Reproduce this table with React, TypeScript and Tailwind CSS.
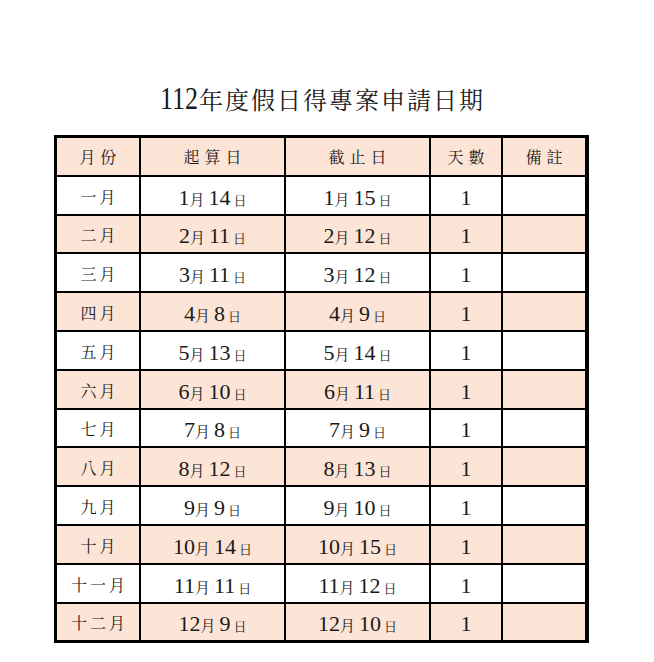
const FONT = "font-['Liberation_Serif','Noto_Serif_CJK_TC','Noto_Sans_CJK_TC',serif]"

const rows: [string, string, string, string, string][] = [
  ['一月', '1', '14', '1', '15'],
  ['二月', '2', '11', '2', '12'],
  ['三月', '3', '11', '3', '12'],
  ['四月', '4', '8', '4', '9'],
  ['五月', '5', '13', '5', '14'],
  ['六月', '6', '10', '6', '11'],
  ['七月', '7', '8', '7', '9'],
  ['八月', '8', '12', '8', '13'],
  ['九月', '9', '9', '9', '10'],
  ['十月', '10', '14', '10', '15'],
  ['十一月', '11', '11', '11', '12'],
  ['十二月', '12', '9', '12', '10'],
]

// 數字用較大字級，月/日用小字
function DateText({ m, d }: { m: string; d: string }) {
  return (
    <span className="flex items-baseline leading-none pt-[5px]">
      <span className="text-[22px]">{m}</span>
      <span className="text-[15px]">月</span>
      <span className="text-[22px] ml-[4px]">{d}</span>
      <span className="text-[13px] ml-[3px]">日</span>
    </span>
  )
}

function Cell({ shaded, children }: { shaded: boolean; children?: React.ReactNode }) {
  return (
    <div
      className={`flex items-center justify-center ${shaded ? 'bg-[#fce4d6]' : 'bg-white'}`}
    >
      {children}
    </div>
  )
}

const headers = ['月份', '起算日', '截止日', '天數', '備註']

export default function App() {
  return (
    <div className={`w-[654px] h-[662px] bg-white text-[#1a1a1a] ${FONT}`}>
      {/* 標題 */}
      <div className="pt-[85px] ml-[54px] w-[535px] flex justify-center">
        <h1 className="flex items-baseline leading-[32px] pl-[2px]">
          <span className="inline-block text-[26px] leading-none scale-y-[1.25] origin-[50%_78%]">
            112
          </span>
          <span className="text-[24px] tracking-[2px] ml-[1px]">年度假日得專案申請日期</span>
        </h1>
      </div>

      {/* 表格 */}
      <div
        className="mt-[18px] ml-[54px] w-[535px] grid gap-[2px] bg-black border-[3px] border-black
                   grid-cols-[82px_143px_143px_70px_82px] auto-rows-[36.8px]"
      >
        {headers.map((h) => (
          <Cell key={h} shaded>
            <span className="text-[16px] tracking-[5px] pl-[5px] pt-[3px]">{h}</span>
          </Cell>
        ))}

        {rows.map(([label, sm, sd, em, ed], i) => {
          const shaded = i % 2 === 1
          return [
            <Cell key={`${i}-a`} shaded={shaded}>
              <span className="text-[16px] tracking-[3px] pl-[3px] pt-[5px]">{label}</span>
            </Cell>,
            <Cell key={`${i}-b`} shaded={shaded}>
              <DateText m={sm} d={sd} />
            </Cell>,
            <Cell key={`${i}-c`} shaded={shaded}>
              <DateText m={em} d={ed} />
            </Cell>,
            <Cell key={`${i}-d`} shaded={shaded}>
              <span className="text-[22px] leading-none pt-[5px]">1</span>
            </Cell>,
            <Cell key={`${i}-e`} shaded={shaded} />,
          ]
        })}
      </div>
    </div>
  )
}
